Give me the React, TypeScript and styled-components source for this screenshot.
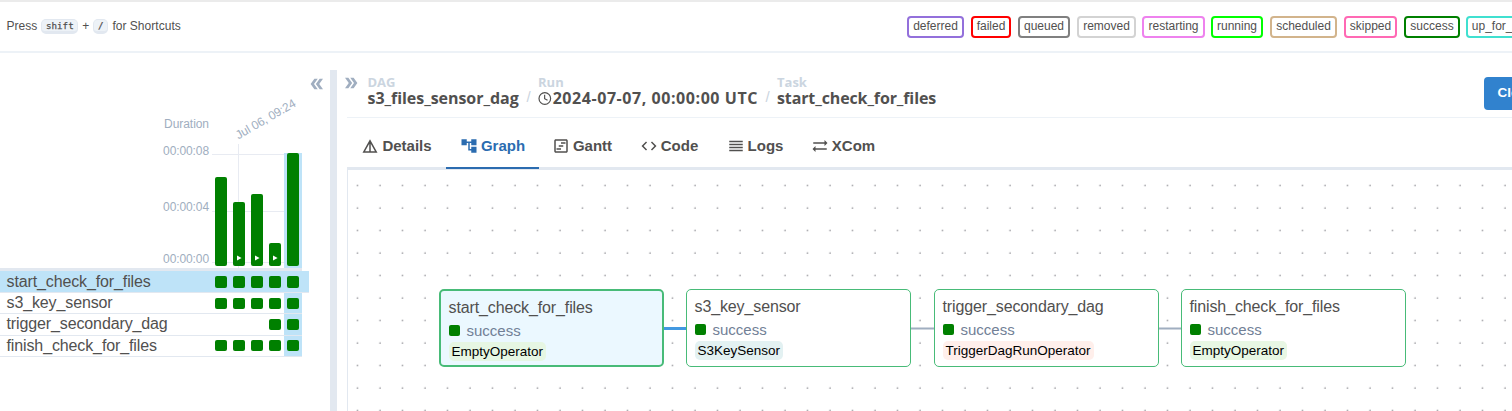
import React from "react";
import styled, { createGlobalStyle } from "styled-components";
import {
  MdAccountTree,
  MdCode,
  MdDetails,
  MdDoubleArrow,
  MdOutlineViewTimeline,
  MdReorder,
  MdSyncAlt,
} from "react-icons/md";

const GlobalStyle = createGlobalStyle`
  * { box-sizing: border-box; }
  body {
    margin: 0;
    background: #fff;
    color: #51504f;
    font-family: "Liberation Sans", Arial, sans-serif;
    overflow: hidden;
  }
`;

const Page = styled.div`
  display: flex;
  flex-direction: column;
  width: 1512px;
  height: 411px;
  overflow: hidden;
`;

const TopBar = styled.header`
  display: flex;
  flex: none;
  align-items: flex-start;
  justify-content: space-between;
  height: 53px;
  padding-left: 6.5px;
  border-top: 2px solid #ebebeb;
  border-bottom: 2px solid #edf2f7;
  font-size: 12px;
`;

const Shortcuts = styled.div`
  display: flex;
  align-items: center;
  height: 16px;
  margin-top: 16px;
  white-space: pre;
  letter-spacing: 0.03px;
`;

const Kbd = styled.kbd<{ $w: number }>`
  width: ${(p) => p.$w}px;
  height: 15px;
  margin: 0 4px;
  border: 1px solid #e2e8f0;
  border-bottom-width: 3px;
  border-radius: 5px;
  background: #edf2f7;
  font: 9.2px/11px "DejaVu Sans Mono", monospace;
  -webkit-text-stroke: 0.25px #51504f;
  text-align: center;
`;

const Legend = styled.div`
  display: flex;
  flex: none;
  width: 605px;
  margin-top: 14px;
  overflow: hidden;
`;

const StateBadge = styled.span<{ $color: string; $w: number; $gap: number }>`
  flex: none;
  width: ${(p) => p.$w}px;
  height: 22px;
  margin-right: ${(p) => p.$gap}px;
  border: 2px solid ${(p) => p.$color};
  border-radius: 4px;
  line-height: 17px;
  text-align: center;
  white-space: nowrap;
`;

const Body = styled.div`
  display: flex;
  flex: 1;
  min-height: 0;
  padding-top: 17px;
`;

const GridPanel = styled.aside`
  flex: none;
  width: 330px;
`;

const Divider = styled.div`
  flex: none;
  width: 7px;
  background: #e2e8f0;
`;

const GridTop = styled.div`
  display: flex;
  height: 83px;
`;

const DurationTitle = styled.div`
  width: 209px;
  padding-top: 47px;
  color: #a0aec0;
  font-size: 12px;
  line-height: 14px;
  letter-spacing: -0.05px;
  text-align: right;
`;

const DateTick = styled.div`
  width: 94px;
  height: 14px;
  margin: 58px 0 0 31px;
  color: #a0aec0;
  font-size: 12px;
  line-height: 14px;
  letter-spacing: -0.12px;
  transform: rotate(-30deg);
  transform-origin: 0 100%;
  white-space: nowrap;
`;

const CollapseIcon = styled(MdDoubleArrow)<{ $flip?: boolean }>`
  flex: none;
  width: 18px;
  height: 18px;
  color: #a0aec0;
  transform: ${(p) => (p.$flip ? "rotate(180deg)" : "none")};
`;

const CollapseButton = styled.div`
  width: 18px;
  margin: 5px 0 0 -26px;
`;

const Chart = styled.div`
  display: flex;
  width: 302px;
  height: 118px;
  border-bottom: 3px solid #e2e8f0;
`;

const Axis = styled.div`
  display: grid;
  grid-template-rows: 56px 52px 14px;
  width: 209px;
  height: 122px;
  margin-top: -9px;
  color: #a0aec0;
  font-size: 12px;
  line-height: 14px;
  letter-spacing: -0.1px;
  text-align: right;
`;

const Plot = styled.div`
  display: flex;
  align-items: flex-end;
  width: 90px;
  height: 124px;
  margin: -9px 0 0 3px;
  background:
    linear-gradient(#e8ebf2, #e8ebf2) 0 10px / 90px 1px no-repeat,
    linear-gradient(#e8ebf2, #e8ebf2) 0 67px / 90px 1px no-repeat,
    linear-gradient(#e8ebf2, #e8ebf2) 0 118px / 90px 1px no-repeat,
    linear-gradient(#e8ebf2, #e8ebf2) 26px 0 / 1px 124px no-repeat;
`;

const BarColumn = styled.div<{ $selected?: boolean }>`
  display: flex;
  align-items: flex-end;
  width: 18px;
  height: 115px;
  padding: 0 3px 2px;
  background: ${(p) => (p.$selected ? "#bee3f8" : "transparent")};
`;

const Bar = styled.div<{ $h: number }>`
  display: flex;
  align-items: flex-end;
  justify-content: center;
  width: 12px;
  height: ${(p) => p.$h}px;
  padding-bottom: 5px;
  border-radius: 2px;
  background: #008000;
`;

const TaskRow = styled.div<{ $h: number; $selected?: boolean }>`
  display: flex;
  width: ${(p) => (p.$selected ? 309 : 302)}px;
  height: ${(p) => p.$h}px;
  border-bottom: 1px solid #e2e8f0;
  background: ${(p) => (p.$selected ? "#bee3f8" : "transparent")};
`;

const TaskName = styled.div<{ $selected?: boolean }>`
  width: 212px;
  padding-top: ${(p) => (p.$selected ? 1 : 0)}px;
  padding-left: 6.5px;
  font-size: 16px;
  line-height: 20px;
  letter-spacing: -0.12px;
`;

const Cell = styled.div<{ $selected?: boolean; $top: number }>`
  width: 18px;
  padding: ${(p) => p.$top}px 3px 0;
  background: ${(p) => (p.$selected ? "#bee3f8" : "transparent")};
`;

const Square = styled.div<{ $w: number; $h: number }>`
  flex: none;
  width: ${(p) => p.$w}px;
  height: ${(p) => p.$h}px;
  border-radius: 2px;
  background: #008000;
`;

const Main = styled.main`
  display: flex;
  flex: 1;
  flex-direction: column;
  min-width: 0;
  padding-left: 10px;
`;

const MainHeader = styled.div`
  display: flex;
  flex: none;
  height: 47px;
  margin-left: -5px;
  padding-top: 4px;
`;

const Crumbs = styled.nav`
  display: flex;
  flex: 1;
  margin: 1px 0 0 7.5px;
  font-family: "Open Sans", sans-serif;
`;

const Crumb = styled.div<{ $w: number }>`
  width: ${(p) => p.$w}px;
  white-space: nowrap;
`;

const CrumbLabel = styled.div`
  height: 15px;
  color: #cbd5e0;
  font-size: 13px;
  font-weight: 700;
  line-height: 15px;
`;

const CrumbValue = styled.div<{ $track: number }>`
  display: flex;
  align-items: center;
  gap: 1px;
  height: 17px;
  font-size: 16px;
  font-weight: 700;
  line-height: 17px;
  letter-spacing: ${(p) => p.$track}px;
`;

const Slash = styled.span`
  width: 19px;
  padding-top: 13px;
  color: #cbd5e0;
  font: 15px/17px "Liberation Sans", sans-serif;
  text-align: center;
`;

const HeaderRule = styled.div`
  flex: none;
  height: 1px;
  background: #edf2f7;
`;

const ClearButton = styled.button`
  flex: none;
  width: 90px;
  height: 33px;
  margin: 3px -62px 0 0;
  padding: 0 0 2px 13.5px;
  border: 0;
  border-radius: 4px;
  background: #3182ce;
  color: #fff;
  font: bold 13.5px "Liberation Sans", sans-serif;
  text-align: left;
`;

const Tabs = styled.div`
  display: flex;
  flex: none;
  height: 52px;
  border-bottom: 3px solid #e2e8f0;
`;

const Tab = styled.div<{ $w: number; $active?: boolean }>`
  display: flex;
  flex: none;
  align-items: center;
  justify-content: center;
  gap: 3px;
  width: ${(p) => p.$w}px;
  height: 51px;
  padding-top: 6px;
  border-bottom: 2px solid ${(p) => (p.$active ? "#2b6cb0" : "transparent")};
  color: ${(p) => (p.$active ? "#2b6cb0" : "inherit")};
  font-size: 15px;
  font-weight: bold;
  svg { width: 18px; height: 18px; }
`;

const Canvas = styled.div`
  position: relative;
  flex: 1;
  overflow: hidden;
  border-left: 1px solid #e2e8f0;
`;

const Drawing = styled.svg`
  position: absolute;
  inset: 0;
`;

const Node = styled.div<{ $x: number; $selected?: boolean }>`
  position: absolute;
  left: ${(p) => p.$x}px;
  top: 119px;
  display: flex;
  flex-direction: column;
  align-items: flex-start;
  width: 225px;
  height: 78px;
  padding: 8px 8px 0;
  border: ${(p) => (p.$selected ? 2 : 1)}px solid #48bb78;
  border-radius: 5px;
  background: ${(p) => (p.$selected ? "#ebf8ff" : "#fff")};
`;

const NodeName = styled.div`
  font-size: 16px;
  line-height: 18px;
  letter-spacing: -0.12px;
`;

const NodeState = styled.div`
  display: flex;
  flex: none;
  align-items: center;
  gap: 7px;
  height: 19px;
  margin-top: 4px;
  color: #718096;
  font-size: 15px;
`;

const Operator = styled.div<{ $bg: string }>`
  flex: none;
  height: 19px;
  margin-top: 2px;
  padding: 0 3px;
  border-radius: 5px;
  background: ${(p) => p.$bg};
  color: #000;
  font-size: 13.5px;
  line-height: 19px;
`;

const states: [string, string, number, number][] = [
  ["deferred", "mediumpurple", 57, 7],
  ["failed", "red", 40, 7],
  ["queued", "gray", 52, 7],
  ["removed", "lightgrey", 59, 6],
  ["restarting", "violet", 63, 6],
  ["running", "lime", 52, 7],
  ["scheduled", "tan", 67, 7],
  ["skipped", "hotpink", 53, 7],
  ["success", "green", 56, 6],
  ["up_for_reschedule", "turquoise", 111, 0],
];

const runs = [
  { height: 89 },
  { height: 64, manual: true },
  { height: 72, manual: true },
  { height: 23, manual: true },
  { height: 113, selected: true },
];

const tasks = [
  { name: "start_check_for_files", h: 22, top: 5, size: 12, from: 0, selected: true },
  { name: "s3_key_sensor", h: 21, top: 5, size: 11, from: 0 },
  { name: "trigger_secondary_dag", h: 22, top: 5, size: 11, from: 3 },
  { name: "finish_check_for_files", h: 21, top: 4, size: 11, from: 0 },
];

const nodes = [
  { x: 90.5, name: "start_check_for_files", op: "EmptyOperator", bg: "#e6f6e3", selected: true },
  { x: 337.5, name: "s3_key_sensor", op: "S3KeySensor", bg: "#e3f1f2" },
  { x: 585.5, name: "trigger_secondary_dag", op: "TriggerDagRunOperator", bg: "#ffefeb" },
  { x: 832.5, name: "finish_check_for_files", op: "EmptyOperator", bg: "#e8f7e4" },
];

const ClockIcon = () => (
  <svg width="15" height="15" viewBox="0 0 15 15" fill="none" stroke="#51504f" strokeWidth="1.3">
    <circle cx="7.5" cy="7.5" r="6.4" />
    <path d="M7.3 3.5V7.7L10.5 9.5" />
  </svg>
);

export default function App() {
  return (
    <Page>
      <GlobalStyle />
      <TopBar>
        <Shortcuts>
          Press<Kbd $w={37}>shift</Kbd>+<Kbd $w={15}>/</Kbd>for Shortcuts
        </Shortcuts>
        <Legend>
          {states.map(([name, color, w, gap]) => (
            <StateBadge key={name} $color={color} $w={w} $gap={gap}>{name}</StateBadge>
          ))}
        </Legend>
      </TopBar>
      <Body>
        <GridPanel>
          <GridTop>
            <DurationTitle>Duration</DurationTitle>
            <DateTick>Jul 06, 09:24</DateTick>
            <CollapseButton><CollapseIcon $flip /></CollapseButton>
          </GridTop>
          <Chart>
            <Axis>
              <span>00:00:08</span>
              <span>00:00:04</span>
              <span>00:00:00</span>
            </Axis>
            <Plot>
              {runs.map((run, i) => (
                <BarColumn key={i} $selected={run.selected}>
                  <Bar $h={run.height}>
                    {run.manual && (
                      <svg width="5" height="6" viewBox="0 0 5 6"><path d="M0 .5 4.6 3 0 5.5Z" fill="#fff" /></svg>
                    )}
                  </Bar>
                </BarColumn>
              ))}
            </Plot>
          </Chart>
          {tasks.map((t) => (
            <TaskRow key={t.name} $h={t.h} $selected={t.selected}>
              <TaskName $selected={t.selected}>{t.name}</TaskName>
              {runs.map((run, i) => (
                <Cell key={i} $top={t.top} $selected={run.selected}>
                  {i >= t.from && <Square $w={12} $h={t.size} />}
                </Cell>
              ))}
            </TaskRow>
          ))}
        </GridPanel>
        <Divider />
        <Main>
          <MainHeader>
            <CollapseIcon />
            <Crumbs>
              <Crumb $w={151.5}>
                <CrumbLabel>DAG</CrumbLabel>
                <CrumbValue $track={-0.05}>s3_files_sensor_dag</CrumbValue>
              </Crumb>
              <Slash>/</Slash>
              <Crumb $w={220}>
                <CrumbLabel>Run</CrumbLabel>
                <CrumbValue $track={0.56}><ClockIcon />2024-07-07, 00:00:00 UTC</CrumbValue>
              </Crumb>
              <Slash>/</Slash>
              <Crumb $w={160}>
                <CrumbLabel>Task</CrumbLabel>
                <CrumbValue $track={-0.12}>start_check_for_files</CrumbValue>
              </Crumb>
            </Crumbs>
            <ClearButton>Clear task</ClearButton>
          </MainHeader>
          <HeaderRule />
          <Tabs>
            <Tab $w={99}><MdDetails />Details</Tab>
            <Tab $w={93} $active><MdAccountTree />Graph</Tab>
            <Tab $w={86}><MdOutlineViewTimeline />Gantt</Tab>
            <Tab $w={88}><MdCode />Code</Tab>
            <Tab $w={84}><MdReorder />Logs</Tab>
            <Tab $w={92}><MdSyncAlt />XCom</Tab>
          </Tabs>
          <Canvas>
            <Drawing width="1165" height="241">
              <defs>
                <pattern id="dots" x="-0.5" y="5.5" width="22.5" height="22.5" patternUnits="userSpaceOnUse">
                  <circle cx="10" cy="10" r="0.7" fill="#6c6c74" />
                </pattern>
              </defs>
              <rect width="1165" height="241" fill="url(#dots)" />
              <path d="M314 158.5H340" stroke="#4299e1" strokeWidth="3" />
              <path d="M562 158.5H587M810 158.5H834" stroke="#a0aec0" strokeWidth="2" />
            </Drawing>
            {nodes.map((n) => (
              <Node key={n.name} $x={n.x} $selected={n.selected}>
                <NodeName>{n.name}</NodeName>
                <NodeState><Square $w={11} $h={11} />success</NodeState>
                <Operator $bg={n.bg}>{n.op}</Operator>
              </Node>
            ))}
          </Canvas>
        </Main>
      </Body>
    </Page>
  );
}
